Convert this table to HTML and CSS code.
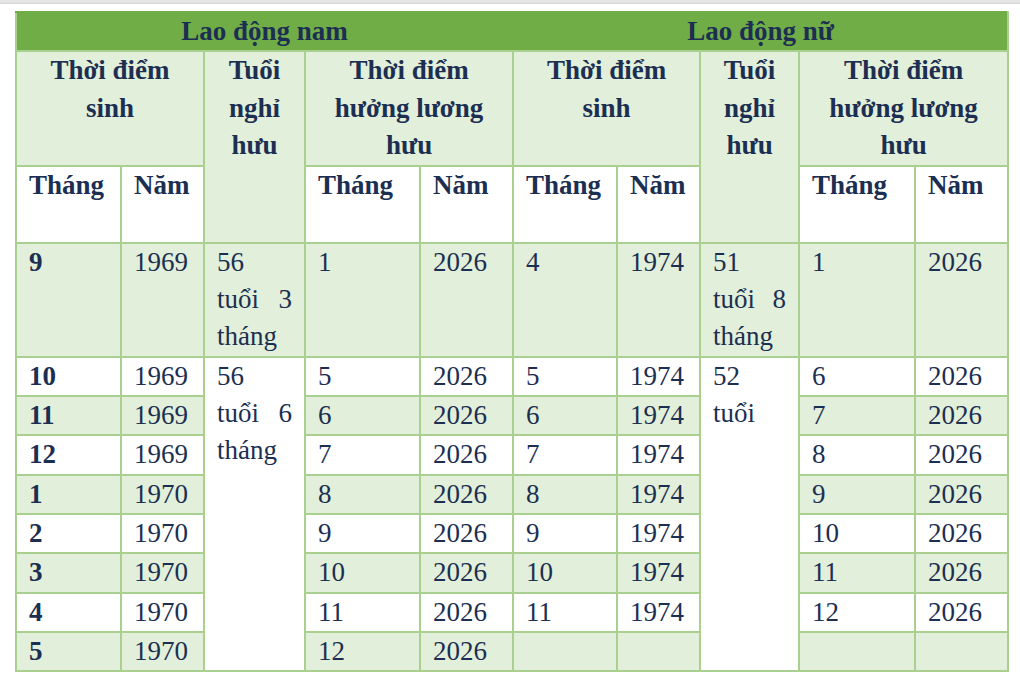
FILE: index.html
```html
<!DOCTYPE html>
<html lang="vi">
<head>
<meta charset="utf-8">
<title>Lao động nam / nữ</title>
<link rel="stylesheet" href="styles.css">
</head>
<body>
<div class="topbar"></div>
<table class="retire">
  <colgroup>
    <col class="c1"><col class="c2"><col class="c3"><col class="c4"><col class="c5">
    <col class="c6"><col class="c7"><col class="c8"><col class="c9"><col class="c10">
  </colgroup>
  <thead>
    <tr class="grp">
      <th colspan="5" class="grp-nam">Lao động nam</th>
      <th colspan="5">Lao động nữ</th>
    </tr>
    <tr class="head">
      <th colspan="2">Thời điểm sinh</th>
      <th rowspan="2">Tuổi nghỉ hưu</th>
      <th colspan="2">Thời điểm hưởng lương hưu</th>
      <th colspan="2">Thời điểm sinh</th>
      <th rowspan="2">Tuổi nghỉ hưu</th>
      <th colspan="2">Thời điểm hưởng lương hưu</th>
    </tr>
    <tr class="sub">
      <th>Tháng</th><th>Năm</th>
      <th>Tháng</th><th>Năm</th>
      <th>Tháng</th><th>Năm</th>
      <th>Tháng</th><th>Năm</th>
    </tr>
  </thead>
  <tbody>
    <tr class="alt top">
      <td class="m">9</td><td>1969</td><td class="age">56 tuổi 3 tháng</td><td>1</td><td>2026</td>
      <td>4</td><td>1974</td><td class="age">51 tuổi 8 tháng</td><td>1</td><td>2026</td>
    </tr>
    <tr>
      <td class="m">10</td><td>1969</td><td class="age span" rowspan="8">56 tuổi 6 tháng</td><td>5</td><td>2026</td>
      <td>5</td><td>1974</td><td class="age span" rowspan="8">52 tuổi</td><td>6</td><td>2026</td>
    </tr>
    <tr class="alt">
      <td class="m">11</td><td>1969</td><td>6</td><td>2026</td>
      <td>6</td><td>1974</td><td>7</td><td>2026</td>
    </tr>
    <tr>
      <td class="m">12</td><td>1969</td><td>7</td><td>2026</td>
      <td>7</td><td>1974</td><td>8</td><td>2026</td>
    </tr>
    <tr class="alt">
      <td class="m">1</td><td>1970</td><td>8</td><td>2026</td>
      <td>8</td><td>1974</td><td>9</td><td>2026</td>
    </tr>
    <tr>
      <td class="m">2</td><td>1970</td><td>9</td><td>2026</td>
      <td>9</td><td>1974</td><td>10</td><td>2026</td>
    </tr>
    <tr class="alt">
      <td class="m">3</td><td>1970</td><td>10</td><td>2026</td>
      <td>10</td><td>1974</td><td>11</td><td>2026</td>
    </tr>
    <tr>
      <td class="m">4</td><td>1970</td><td>11</td><td>2026</td>
      <td>11</td><td>1974</td><td>12</td><td>2026</td>
    </tr>
    <tr class="alt">
      <td class="m">5</td><td>1970</td><td>12</td><td>2026</td>
      <td></td><td></td><td></td><td></td>
    </tr>
  </tbody>
</table>
</body>
</html>
```
FILE: styles.css
```css
html, body {
  margin: 0;
  padding: 0;
  background: #ffffff;
}

body {
  font-family: "Liberation Serif", Tinos, "Times New Roman", "DejaVu Serif", serif;
  color: #1c2f52;
}

.topbar {
  height: 3px;
  background: #e4e4e4;
  border-bottom: 1px solid #d6d6d6;
}

.retire {
  margin: 7px 0 0 15px;
  width: 992px;
  table-layout: fixed;
  border-collapse: collapse;
  font-family: "Liberation Serif", Tinos, "Times New Roman", "DejaVu Serif", serif;
  font-size: 27px;
  line-height: 37.3px;
}

.c1 { width: 105px; }
.c2 { width: 83px; }
.c3 { width: 101px; }
.c4 { width: 115px; }
.c5 { width: 93px; }
.c6 { width: 104px; }
.c7 { width: 83px; }
.c8 { width: 99px; }
.c9 { width: 116px; }
.c10 { width: 93px; }

.retire th,
.retire td {
  border: 2px solid #a9d08e;
  padding: 0 12px;
  vertical-align: top;
  overflow: hidden;
}

.retire th {
  font-weight: bold;
}

.grp th {
  background: #70ad47;
  text-align: center;
  border-top-color: #70ad47;
}

.grp .grp-nam {
  border-right-color: #70ad47;
}

.head th {
  background: #e2efda;
  text-align: center;
  line-height: 37.6px;
}

.sub th {
  background: #ffffff;
  text-align: left;
  padding-bottom: 37.5px;
}

.retire td {
  background: #ffffff;
  text-align: left;
  font-weight: normal;
}

.retire .alt td {
  background: #e2efda;
}

.retire td.m {
  font-weight: bold;
}

.retire td.age {
  text-align: justify;
}

.retire td.span {
  background: #ffffff;
}
```
